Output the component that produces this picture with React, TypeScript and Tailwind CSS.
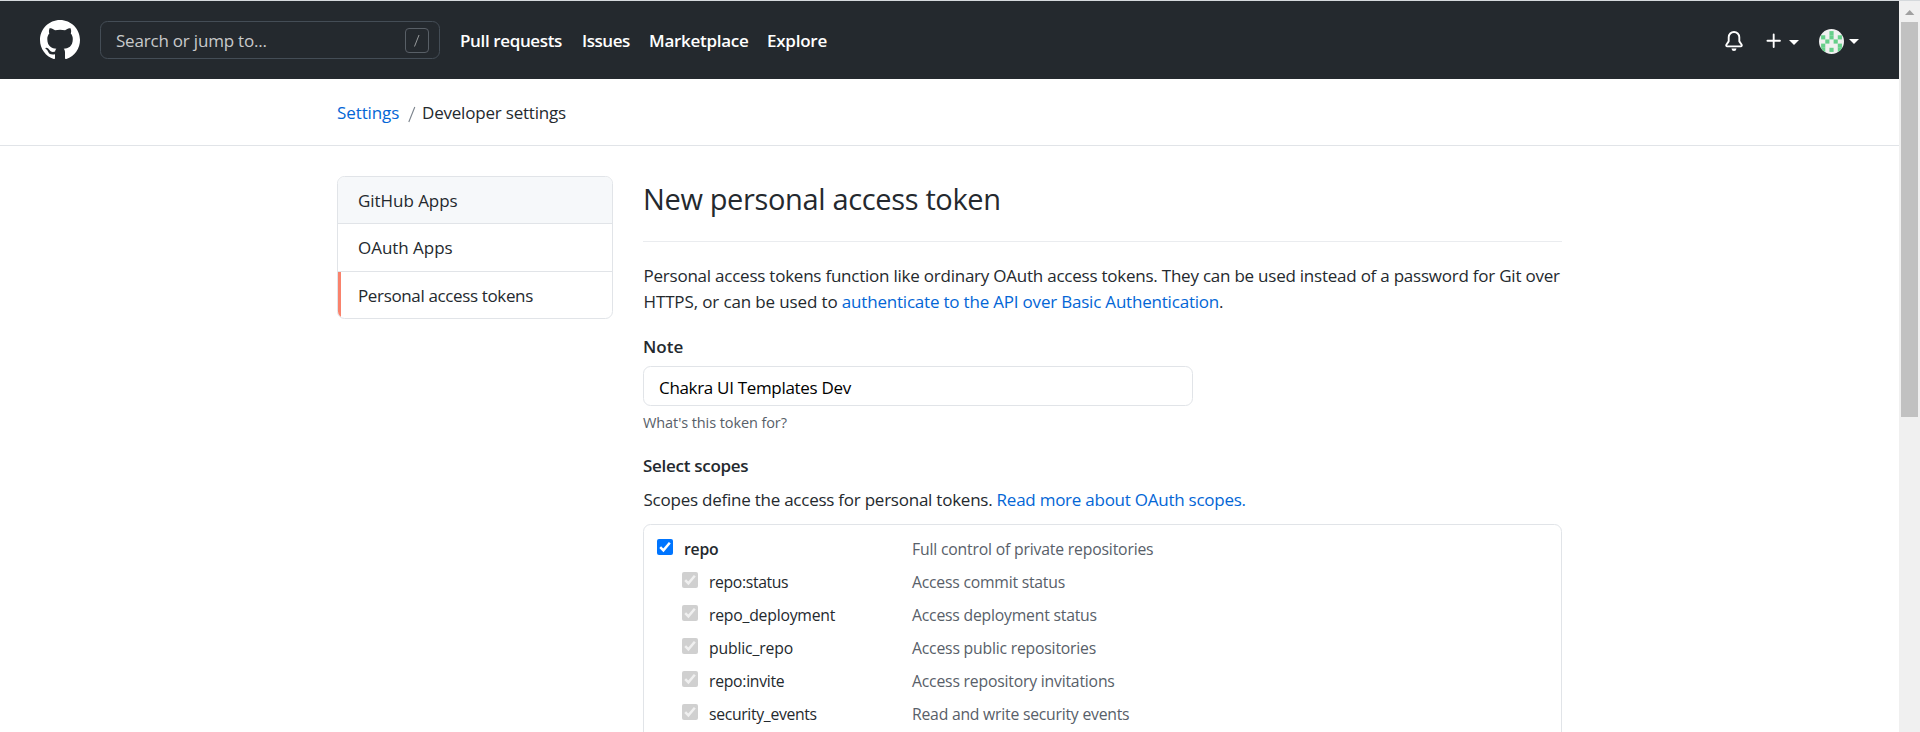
import React from "react";

const scopes = [
  { name: "repo:status", text: "Access commit status", a: "tracking-[-0.36px]", b: "tracking-[-0.23px]" },
  { name: "repo_deployment", text: "Access deployment status", a: "tracking-[-0.22px]", b: "tracking-[-0.21px]" },
  { name: "public_repo", text: "Access public repositories", a: "tracking-[-0.16px]", b: "tracking-[-0.2px]" },
  { name: "repo:invite", text: "Access repository invitations", a: "tracking-[-0.28px]", b: "tracking-[-0.2px]" },
  { name: "security_events", text: "Read and write security events", a: "tracking-[-0.33px]", b: "tracking-[-0.23px]" },
];

function Check({ disabled = false }: { disabled?: boolean }) {
  return (
    <svg width="16" height="16" viewBox="0 0 16 16" className="shrink-0">
      <rect width="16" height="16" rx="2" fill={disabled ? "#d0d0d0" : "#0075ff"} />
      <path d="M3.2 8.2l3.2 3.2 6.4-7.6" fill="none" stroke={disabled ? "#f0f0f0" : "#fff"} strokeWidth="2.5" />
    </svg>
  );
}

function Caret() {
  return (
    <svg width="10" height="5" viewBox="0 0 10 5" className="shrink-0">
      <path d="M0 0h10L5 5z" fill="#fff" />
    </svg>
  );
}

function Avatar() {
  const rows = ["00100", "10101", "01010", "10001", "10101"];
  return (
    <svg width="25" height="25" viewBox="0 0 25 25" className="shrink-0">
      <clipPath id="round">
        <circle cx="12.5" cy="12.5" r="12.5" />
      </clipPath>
      <g clipPath="url(#round)">
        <rect width="25" height="25" fill="#f0f0f0" />
        {rows.map((row, y) =>
          row.split("").map((v, x) =>
            v === "1" ? (
              <rect key={`${x}-${y}`} x={2.1 + x * 4.17} y={2.1 + y * 4.17} width="4.17" height="4.17" fill="#66cf8a" />
            ) : null,
          ),
        )}
      </g>
    </svg>
  );
}

function Header() {
  return (
    <header className="flex h-[78px] items-center bg-[#24292e] pl-10 pr-[40px] text-[17px] text-white">
      <svg width="40" height="40" viewBox="0 0 16 16" fill="#fff" className="shrink-0">
        <path d="M8 0C3.58 0 0 3.58 0 8c0 3.54 2.29 6.53 5.47 7.59.4.07.55-.17.55-.38 0-.19-.01-.82-.01-1.49-2.01.37-2.53-.49-2.69-.94-.09-.23-.48-.94-.82-1.13-.28-.15-.68-.52-.01-.53.63-.01 1.08.58 1.23.82.72 1.21 1.87.87 2.33.66.07-.52.28-.87.51-1.07-1.78-.2-3.64-.89-3.64-3.95 0-.87.31-1.59.82-2.15-.08-.2-.36-1.02.08-2.12 0 0 .67-.21 2.2.82.64-.18 1.32-.27 2-.27.68 0 1.36.09 2 .27 1.53-1.04 2.2-.82 2.2-.82.44 1.1.16 1.92.08 2.12.51.56.82 1.27.82 2.15 0 3.07-1.87 3.75-3.65 3.95.29.25.54.73.54 1.48 0 1.07-.01 1.93-.01 2.2 0 .21.15.46.55.38A8.013 8.013 0 0016 8c0-4.42-3.58-8-8-8z" />
      </svg>
      <div className="ml-5 flex h-[38px] w-[340px] items-center justify-between rounded-[7.5px] border border-[#444d56] pl-[15px] pr-[10px]">
        <span className="pt-[2px] tracking-[-0.2px] text-[#c8cacb]">Search or jump to...</span>
        <svg width="24" height="25" viewBox="0 0 24 25" fill="none">
          <rect x="0.5" y="0.5" width="23" height="24" rx="3.5" stroke="#585f66" />
          <path d="M9.5 18.5L14 7" stroke="#979a9c" />
        </svg>
      </div>
      <nav className="flex pt-[2px] font-semibold">
        <a className="ml-5 w-[122px] tracking-[-0.37px]">Pull requests</a>
        <a className="w-[67px] tracking-[-0.46px]">Issues</a>
        <a className="w-[118px] tracking-[-0.27px]">Marketplace</a>
        <a className="w-[62px] tracking-[-0.25px]">Explore</a>
      </nav>
      <div className="ml-auto flex items-center">
        <svg width="20" height="20" viewBox="0 0 16 16" fill="#fff" className="mt-[2px]">
          <path d="M8 16a2 2 0 001.985-1.75c.017-.137-.097-.25-.235-.25h-3.5c-.138 0-.252.113-.235.25A2 2 0 008 16z" />
          <path
            fillRule="evenodd"
            d="M8 1.5A3.5 3.5 0 004.5 5v2.947c0 .346-.102.683-.294.97l-1.703 2.556a.018.018 0 00-.003.01l.001.006c0 .002.002.004.004.006a.017.017 0 00.006.004l.007.001h10.964l.007-.001a.016.016 0 00.006-.004.016.016 0 00.004-.006l.001-.007a.017.017 0 00-.003-.01l-1.703-2.554a1.75 1.75 0 01-.294-.97V5A3.5 3.5 0 008 1.5zM3 5a5 5 0 0110 0v2.947c0 .05.015.098.042.139l1.703 2.555A1.518 1.518 0 0113.482 13H2.518a1.518 1.518 0 01-1.263-2.36l1.703-2.554A.25.25 0 003 7.947V5z"
          />
        </svg>
        <svg width="20" height="20" viewBox="0 0 16 16" fill="#fff" className="ml-5 mt-[2px]">
          <path d="M7.75 2a.75.75 0 01.75.75V7h4.25a.75.75 0 110 1.5H8.5v4.25a.75.75 0 11-1.5 0V8.5H2.75a.75.75 0 010-1.5H7V2.75A.75.75 0 017.75 2z" />
        </svg>
        <div className="ml-[5px] mt-[5px]">
          <Caret />
        </div>
        <div className="ml-5 mt-[3px]">
          <Avatar />
        </div>
        <div className="ml-[5px] mt-[3px]">
          <Caret />
        </div>
      </div>
    </header>
  );
}

export default function App() {
  return (
    <div className="flex h-[732px] w-[1920px] overflow-hidden bg-white font-['Open_Sans','Noto_Sans',sans-serif] text-[17px] leading-[26px] text-[#24292e]">
      <div className="w-[1899px] shrink-0">
        <div className="h-px bg-[#d5d9dc]" />
        <Header />
        <div className="flex h-[67px] items-center border-b border-[#e1e4e8] pl-[337px] pt-[2px]">
          <span className="w-[71px] tracking-[-0.1px] text-[#0366d6]">Settings</span>
          <svg width="8" height="17" viewBox="0 0 8 17" fill="none" className="mt-[2px]">
            <path d="M0.8 16L6.8 1" stroke="#7b838c" strokeWidth="1.1" />
          </svg>
          <span className="ml-[6px] tracking-[-0.2px]">Developer settings</span>
        </div>
        <div className="flex pl-[337px] pt-[30px]">
          <nav className="h-[143px] w-[276px] shrink-0 overflow-hidden rounded-[7.5px] border border-[#e1e4e8]">
            <a className="flex h-[47px] items-center border-b border-[#e1e4e8] bg-[#f6f8fa] pl-5 pt-px tracking-[-0.05px]">GitHub Apps</a>
            <a className="flex h-12 items-center border-b border-[#e1e4e8] pl-5 tracking-[-0.04px]">OAuth Apps</a>
            <a className="flex h-[46px] items-center border-l-3 border-[#f9826c] pl-[17px] pt-[2px] tracking-[-0.36px]">Personal access tokens</a>
          </nav>
          <main className="ml-[30px] w-[919px]">
            <h1 className="flex h-[66px] border-b border-[#eaecef] pt-[3px] text-[29px] leading-[40px] tracking-[-0.35px]">
              New personal access token
            </h1>
            <p className="mt-[21px] whitespace-nowrap pl-[0.5px] leading-[26.25px]">
              <span className="tracking-[-0.232px]">
                Personal access tokens function like ordinary OAuth access tokens. They can be used instead of a password for Git over
              </span>
              <br />
              <span className="tracking-[-0.13px]">HTTPS, or can be used to </span>
              <span className="tracking-[-0.203px] text-[#0366d6]">authenticate to the API over Basic Authentication</span>.
            </p>
            <div className="mt-[18px] h-[26px] font-semibold">Note</div>
            <div className="mt-[6px] flex h-10 w-[550px] items-center rounded-[7.5px] border border-[#e1e4e8] pl-[15px] pt-[4px] tracking-[-0.32px] text-black">
              Chakra UI Templates Dev
            </div>
            <div className="mt-[6px] h-[22px] text-[14.5px] leading-[22px] tracking-[-0.09px] text-[#586069]">What's this token for?</div>
            <div className="mt-[19px] h-[26px] font-semibold tracking-[-0.28px]">Select scopes</div>
            <div className="mt-2 h-[26px] whitespace-nowrap pl-[0.5px]">
              <span className="tracking-[-0.24px]">Scopes define the access for personal tokens. </span>
              <span className="tracking-[-0.249px] text-[#0366d6]">Read more about OAuth scopes.</span>
            </div>
            <div className="mt-[11px] h-[240px] rounded-[7.5px] border border-[#e1e4e8] pt-2 text-[15.75px]">
              <div className="flex h-[33px] items-center pl-[13px]">
                <div className="mb-1">
                  <Check />
                </div>
                <span className="ml-[11px] w-[228px] font-semibold tracking-[-0.2px]">repo</span>
                <span className="tracking-[-0.18px] text-[#586069]">Full control of private repositories</span>
              </div>
              {scopes.map((s) => (
                <div key={s.name} className="flex h-[33px] items-center pl-[38px]">
                  <div className="mb-1">
                    <Check disabled />
                  </div>
                  <span className={`ml-[11px] w-[203px] ${s.a}`}>{s.name}</span>
                  <span className={`text-[#586069] ${s.b}`}>{s.text}</span>
                </div>
              ))}
            </div>
          </main>
        </div>
      </div>
      <div className="flex w-[21px] shrink-0 flex-col border-t border-[#d5d9dc] bg-[#f0f0f0] pl-[2px]">
        <svg width="17" height="21" viewBox="0 0 17 21">
          <path d="M4 14h9.4L8.7 9z" fill="#a0a0a0" />
        </svg>
        <div className="h-[395px] w-[17px] bg-[#c1c1c1]" />
      </div>
    </div>
  );
}
